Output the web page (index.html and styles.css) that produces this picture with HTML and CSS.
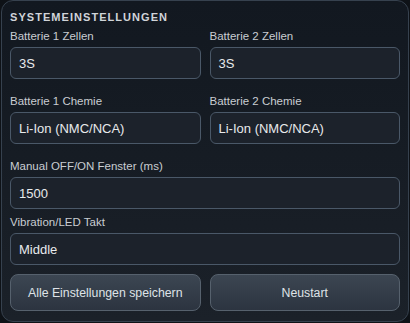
FILE: index.html
```html
<!DOCTYPE html>
<html lang="de">
<head>
<meta charset="utf-8">
<title>Systemeinstellungen</title>
<link rel="stylesheet" href="styles.css">
</head>
<body>
<section class="card">
  <h2 class="title">SYSTEMEINSTELLUNGEN</h2>
  <div class="pair">
    <div class="field">
      <label class="label">Batterie 1 Zellen</label>
      <div class="input">3S</div>
    </div>
    <div class="field">
      <label class="label">Batterie 2 Zellen</label>
      <div class="input">3S</div>
    </div>
  </div>
  <div class="pair pair-next">
    <div class="field">
      <label class="label">Batterie 1 Chemie</label>
      <div class="input">Li-Ion (NMC/NCA)</div>
    </div>
    <div class="field">
      <label class="label">Batterie 2 Chemie</label>
      <div class="input">Li-Ion (NMC/NCA)</div>
    </div>
  </div>
  <div class="field single-first">
    <label class="label">Manual OFF/ON Fenster (ms)</label>
    <div class="input">1500</div>
  </div>
  <div class="field single-next">
    <label class="label">Vibration/LED Takt</label>
    <div class="input">Middle</div>
  </div>
  <div class="actions">
    <button class="btn">Alle Einstellungen speichern</button>
    <button class="btn">Neustart</button>
  </div>
</section>
</body>
</html>
```

FILE: styles.css
```css
html, body {
  margin: 0;
  padding: 0;
  background: #0e1217;
}
body {
  width: 410px;
  height: 323px;
  padding: 0 1px 1px 1px;
  box-sizing: border-box;
  font-family: "Liberation Sans", Arial, sans-serif;
}
.card {
  box-sizing: border-box;
  height: 322px;
  border: 1px solid #36414e;
  border-radius: 12px;
  padding: 9px 8px 8px 8px;
  background: linear-gradient(180deg, #121820 0%, #171d25 60%, #1b2129 100%);
  display: flex;
  flex-direction: column;
}
.title {
  margin: 0;
  font-size: 11px;
  font-weight: bold;
  letter-spacing: 1.05px;
  line-height: 14px;
  color: #d0d4d9;
}
.pair {
  display: grid;
  grid-template-columns: 1fr 1fr;
  column-gap: 9px;
  margin-top: 5px;
}
.pair-next {
  margin-top: 15px;
}
.field {
  display: flex;
  flex-direction: column;
}
.single-first {
  margin-top: 15px;
}
.single-next {
  margin-top: 6px;
}
.label {
  font-size: 11.5px;
  line-height: 14px;
  color: #c9cdd2;
  margin-bottom: 4px;
}
.input {
  box-sizing: border-box;
  height: 32px;
  border: 1px solid #4a5868;
  border-radius: 6px;
  background: #1c222b;
  padding: 0 8px;
  display: flex;
  align-items: center;
  font-size: 13px;
  color: #e8eaec;
}
.actions {
  display: grid;
  grid-template-columns: 1fr 1fr;
  column-gap: 9px;
  margin-top: 9px;
}
.btn {
  box-sizing: border-box;
  height: 37px;
  border: 1px solid #56616d;
  border-radius: 8px;
  background: linear-gradient(180deg, #3c4652 0%, #2c3440 100%);
  font-family: "Liberation Sans", Arial, sans-serif;
  font-size: 12.3px;
  color: #dfe3e7;
  padding: 0;
}
```
